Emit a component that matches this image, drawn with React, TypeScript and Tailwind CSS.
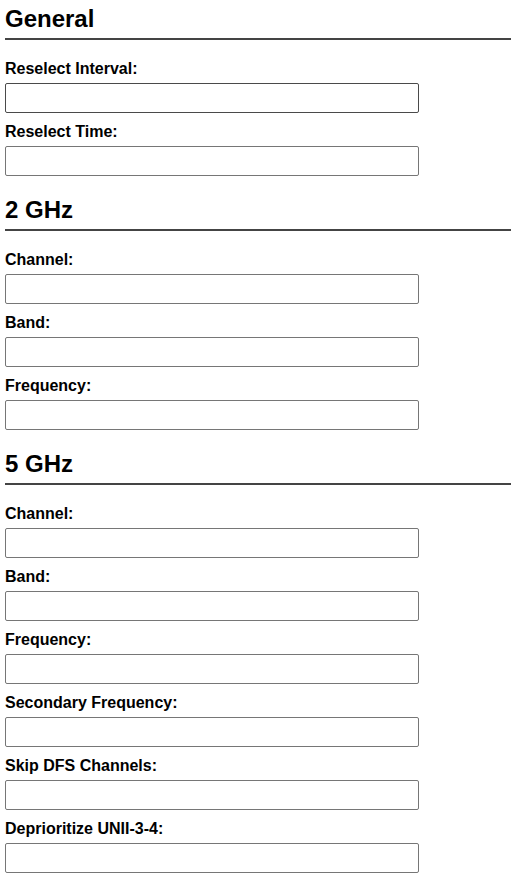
import React from "react";

type Section = { title: string; fields: string[] };

const sections: Section[] = [
  { title: "General", fields: ["Reselect Interval:", "Reselect Time:"] },
  { title: "2 GHz", fields: ["Channel:", "Band:", "Frequency:"] },
  {
    title: "5 GHz",
    fields: [
      "Channel:",
      "Band:",
      "Frequency:",
      "Secondary Frequency:",
      "Skip DFS Channels:",
      "Deprioritize UNII-3-4:",
    ],
  },
];

export default function App() {
  return (
    <div
      className="min-h-[886px] bg-white pl-[5px] text-black"
      style={{ fontFamily: '"Liberation Sans", Arial, sans-serif' }}
    >
      {sections.map((s, si) => (
        <section key={s.title} className={si === 0 ? "pt-[5px]" : "pt-[10px]"}>
          <h2 className="border-b-2 border-[#444444] pb-[5px] text-[24px] font-bold leading-[28px]">
            {s.title}
          </h2>
          <div className="flex flex-col pt-[20px]">
            {s.fields.map((f, fi) => (
              <div key={f} className="flex flex-col pb-[10px]">
                <label className="text-[16px] font-bold leading-[18px]">{f}</label>
                <input
                  type="text"
                  className={
                    "mt-[5px] h-[30px] w-[414px] rounded-[2px] border bg-white px-[2px] text-[13px] outline-none " +
                    (si === 0 && fi === 0 ? "border-[#4a4a4a]" : "border-[#767676]")
                  }
                />
              </div>
            ))}
          </div>
        </section>
      ))}
    </div>
  );
}
